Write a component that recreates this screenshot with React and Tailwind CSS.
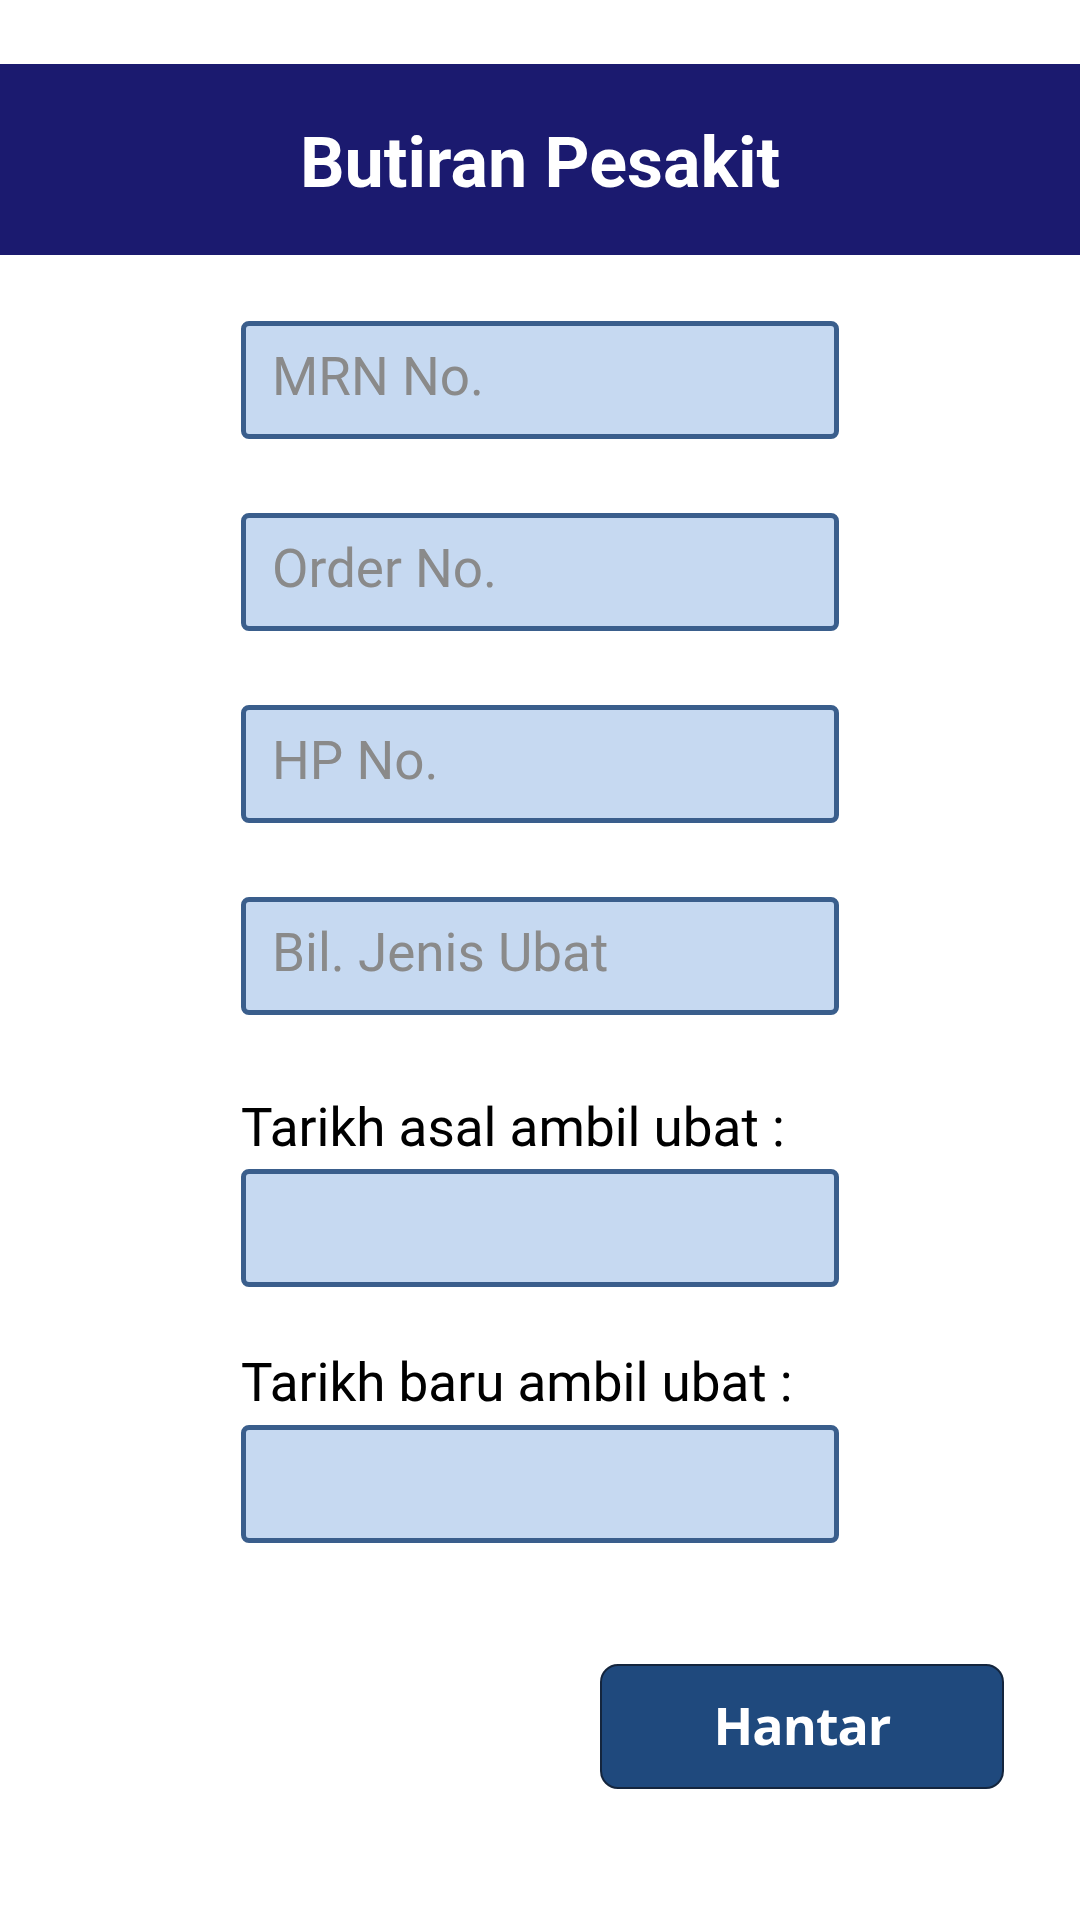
import { useState } from 'react'

const fields = [
    { key: 'mrn', placeholder: 'MRN No.' },
    { key: 'order', placeholder: 'Order No.' },
    { key: 'hp', placeholder: 'HP No.' },
    { key: 'bil', placeholder: 'Bil. Jenis Ubat' },
]

const boxClass =
    "block w-[598px] h-[118px] bg-[#c6d9f1] border-[5px] border-[#3a5e8c] rounded-[8px] px-[26px] pb-[6px] text-[53px] text-[#222] placeholder:text-[#8a8a8a] outline-none font-['Roboto',sans-serif]"

const App = () => {
    const [values, setValues] = useState({})

    const update = (key, val) => setValues({ ...values, [key]: val })

    return (
        <div className="w-[1080px] min-h-[1920px] bg-white pt-[64px] font-['Roboto',sans-serif]">
            <header className="h-[191px] bg-[#1b1a6f] flex items-center justify-center">
                <h1 className="text-white font-bold text-[70px] leading-none pt-[6px]">Butiran Pesakit</h1>
            </header>

            <form className="pl-[241px] pt-[66px]" onSubmit={e => e.preventDefault()}>
                <div className="flex flex-col gap-[74px]">
                    {fields.map(f => (
                        <input
                            key={f.key}
                            value={values[f.key] || ''}
                            onChange={e => update(f.key, e.target.value)}
                            placeholder={f.placeholder}
                            className={boxClass}
                        />
                    ))}
                </div>

                {/* tarikh fields */}
                <label className="block mt-[87px] text-[53px] leading-none text-black">Tarikh asal ambil ubat :</label>
                <input
                    value={values.asal || ''}
                    onChange={e => update('asal', e.target.value)}
                    className={`${boxClass} mt-[14px]`}
                />

                <label className="block mt-[70px] text-[53px] leading-none text-black">Tarikh baru ambil ubat :</label>
                <input
                    value={values.baru || ''}
                    onChange={e => update('baru', e.target.value)}
                    className={`${boxClass} mt-[15px]`}
                />

                <div className="flex justify-end pr-[76px] mt-[121px]">
                    <button
                        type="submit"
                        className="w-[404px] h-[125px] bg-[#1f497d] border-2 border-[#14253d] rounded-[18px] text-white font-bold text-[52px] tracking-[-1px] font-['Open_Sans',sans-serif] pb-[4px]"
                    >
                        Hantar
                    </button>
                </div>
            </form>
        </div>
    )
}

export default App
